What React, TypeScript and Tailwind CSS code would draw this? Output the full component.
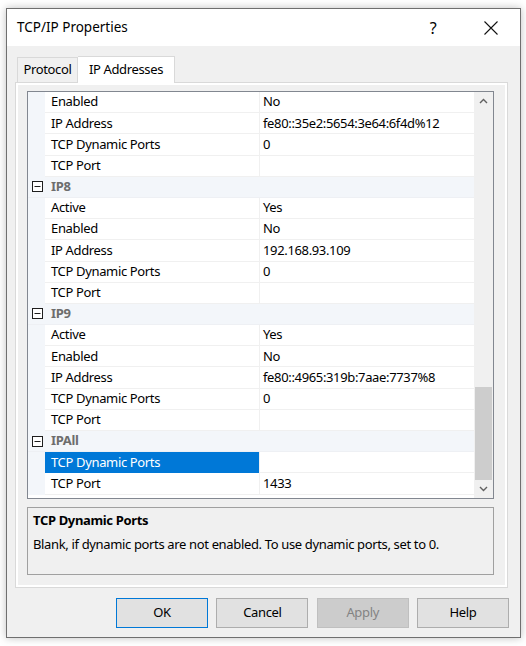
import React from "react";

type Row =
  | { kind: "cat"; name: string }
  | { kind: "prop"; label: string; value: string; selected?: boolean };

const rows: Row[] = [
  { kind: "prop", label: "Enabled", value: "No" },
  { kind: "prop", label: "IP Address", value: "fe80::35e2:5654:3e64:6f4d%12" },
  { kind: "prop", label: "TCP Dynamic Ports", value: "0" },
  { kind: "prop", label: "TCP Port", value: "" },
  { kind: "cat", name: "IP8" },
  { kind: "prop", label: "Active", value: "Yes" },
  { kind: "prop", label: "Enabled", value: "No" },
  { kind: "prop", label: "IP Address", value: "192.168.93.109" },
  { kind: "prop", label: "TCP Dynamic Ports", value: "0" },
  { kind: "prop", label: "TCP Port", value: "" },
  { kind: "cat", name: "IP9" },
  { kind: "prop", label: "Active", value: "Yes" },
  { kind: "prop", label: "Enabled", value: "No" },
  { kind: "prop", label: "IP Address", value: "fe80::4965:319b:7aae:7737%8" },
  { kind: "prop", label: "TCP Dynamic Ports", value: "0" },
  { kind: "prop", label: "TCP Port", value: "" },
  { kind: "cat", name: "IPAll" },
  { kind: "prop", label: "TCP Dynamic Ports", value: "", selected: true },
  { kind: "prop", label: "TCP Port", value: "1433" },
];

function MinusBox() {
  return (
    <svg width="11" height="11" viewBox="0 0 11 11" className="block">
      <rect x="0.5" y="0.5" width="10" height="10" fill="white" stroke="#1e1e1e" />
      <line x1="2.5" y1="5.5" x2="8.5" y2="5.5" stroke="#1e1e1e" />
    </svg>
  );
}

function Chevron({ up }: { up?: boolean }) {
  return (
    <svg width="9" height="6" viewBox="0 0 9 6" className="block">
      <path
        d={up ? "M1 5 L4.5 1.5 L8 5" : "M1 1 L4.5 4.5 L8 1"}
        fill="none"
        stroke="#606060"
        strokeWidth="1.4"
      />
    </svg>
  );
}

export default function App() {
  const font = { fontFamily: '"Segoe UI", "Noto Sans", sans-serif' };
  return (
    <div
      className="w-[526px] h-[646px] bg-white pt-[8px] pl-[6px] text-[13px] tracking-[-0.35px] text-[#000]"
      style={font}
    >
      <div className="w-[515px] h-[630px] border border-[#6f6f6f] bg-[#f0f0f0] flex flex-col shadow-[0_0_8px_rgba(0,0,0,0.25)]">
        {/* Title bar */}
        <div className="h-[37px] bg-white flex items-center shrink-0">
          <div className="pl-[10px] text-[13.5px] tracking-normal leading-none flex-1">TCP/IP Properties</div>
          <div className="w-[46px] flex justify-center text-[16px] leading-none mr-[12px]">?</div>
          <div className="w-[46px] h-full flex items-center justify-center mr-[6px]">
            <svg width="14" height="14" viewBox="0 0 14 14">
              <path d="M0.5 0.5 L13.5 13.5 M13.5 0.5 L0.5 13.5" stroke="#111" strokeWidth="1.1" />
            </svg>
          </div>
        </div>

        {/* Tabs */}
        <div className="pl-[8px] pr-[12px] pt-[9px]">
          <div className="flex items-end h-[27px] pl-[2px]">
            <div className="h-[25px] w-[61px] border border-b-0 border-[#d9d9d9] bg-[#f0f0f0] flex items-center justify-center">
              Protocol
            </div>
            <div className="h-[27px] w-[97px] border border-b-0 border-l-0 border-[#d9d9d9] bg-white flex items-center justify-center relative top-[1px] z-10">
              IP Addresses
            </div>
          </div>
          <div className="h-[506px] border border-[#d9d9d9] bg-white p-[2px]">
            <div className="h-full bg-[#f0f0f0] pt-[6px] pl-[9px] pr-[11px]">
              {/* Property grid */}
              <div className="h-[408px] border border-[#828790] bg-white flex">
                <div className="flex-1 flex flex-col">
                  {rows.map((r, i) =>
                    r.kind === "cat" ? (
                      <div key={i} className="h-[21.2px] flex items-center bg-[#f3f6fa] border-b border-[#eef0f4]">
                        <div className="w-[17px] flex justify-center pl-[1px]">
                          <MinusBox />
                        </div>
                        <div className="pl-[6px] font-bold text-[#6d6d6d]">{r.name}</div>
                      </div>
                    ) : (
                      <div key={i} className="h-[21.2px] flex">
                        <div className="w-[17px] bg-[#f3f6fa] shrink-0" />
                        <div
                          className={
                            r.selected
                              ? "w-[214px] shrink-0 pl-[6px] flex items-center bg-[#0078d7] text-white border-b border-[#0078d7]"
                              : "w-[214px] shrink-0 pl-[6px] flex items-center border-b border-[#f0f0f0]"
                          }
                        >
                          {r.label}
                        </div>
                        <div className="w-px bg-[#f0f0f0] shrink-0" />
                        <div className="flex-1 pl-[3px] flex items-center border-b border-[#f0f0f0]">{r.value}</div>
                      </div>
                    )
                  )}
                </div>
                {/* Scrollbar */}
                <div className="w-[19px] bg-[#f0f0f0] flex flex-col shrink-0">
                  <div className="h-[18px] flex items-center justify-center">
                    <Chevron up />
                  </div>
                  <div className="flex-1 flex flex-col">
                    <div className="flex-1" />
                    <div className="h-[93px] mx-[1px] bg-[#cdcdcd]" />
                  </div>
                  <div className="h-[18px] flex items-center justify-center">
                    <Chevron />
                  </div>
                </div>
              </div>

              {/* Description */}
              <div className="mt-[8px] h-[68px] border border-[#a0a0a0] px-[5px] pt-[2px]">
                <div className="font-bold leading-[20px]">TCP Dynamic Ports</div>
                <div className="leading-[20px] mt-[4px]">
                  Blank, if dynamic ports are not enabled. To use dynamic ports, set to 0.
                </div>
              </div>
            </div>
          </div>
        </div>

        {/* Buttons */}
        <div className="flex justify-end gap-[8.33px] pr-[11px] pt-[10px]">
          <button className="w-[92px] h-[30px] bg-[#e1e1e1] border border-[#0078d7]">OK</button>
          <button className="w-[92px] h-[30px] bg-[#e1e1e1] border border-[#adadad]">Cancel</button>
          <button className="w-[92px] h-[30px] bg-[#cccccc] border border-[#bfbfbf] text-[#838383]">Apply</button>
          <button className="w-[92px] h-[30px] bg-[#e1e1e1] border border-[#adadad]">Help</button>
        </div>
      </div>
    </div>
  );
}
